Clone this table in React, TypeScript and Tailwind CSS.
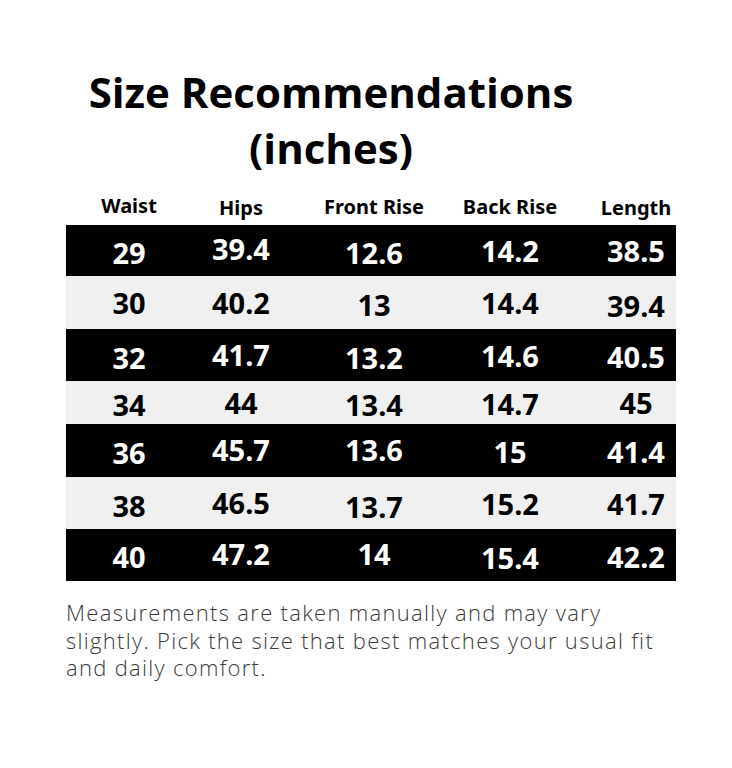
import React from 'react';

const headers: [string, number][] = [
  ['Waist', -2],
  ['Hips', 0],
  ['Front Rise', -1],
  ['Back Rise', -1],
  ['Length', 0],
];

// each cell: [value, vertical nudge in px] - the printed chart isn't perfectly aligned
const rows: { h: string; cells: [string, number][] }[] = [
  { h: 'h-[51px]', cells: [['29', 2], ['39.4', -2], ['12.6', 2], ['14.2', 0], ['38.5', 0]] },
  { h: 'h-[53px]', cells: [['30', 0], ['40.2', 0], ['13', 2], ['14.4', 0], ['39.4', 3]] },
  { h: 'h-[52px]', cells: [['32', 2], ['41.7', -1], ['13.2', 2], ['14.6', 0], ['40.5', 1]] },
  { h: 'h-[43px]', cells: [['34', 2], ['44', 0], ['13.4', 2], ['14.7', 1], ['45', 0]] },
  { h: 'h-[53px]', cells: [['36', 2], ['45.7', -1], ['13.6', -1], ['15', 1], ['41.4', 1]] },
  { h: 'h-[52px]', cells: [['38', 2], ['46.5', -1], ['13.7', 3], ['15.2', 0], ['41.7', 0]] },
  { h: 'h-[52px]', cells: [['40', 1], ['47.2', -2], ['14', -2], ['15.4', 2], ['42.2', 1]] },
];

const nudge: Record<number, string> = {
  [-2]: '-translate-y-[2px]',
  [-1]: '-translate-y-[1px]',
  0: '',
  1: 'translate-y-[1px]',
  2: 'translate-y-[2px]',
  3: 'translate-y-[3px]',
};

const cols = 'grid grid-cols-[126px_98px_168px_104px_114px] items-center';
const cell = ['text-center', 'text-center', 'text-center', 'text-center', 'text-center pl-[34px]'];

const App: React.FC = () => {
  return <div className="w-[732px] h-[768px] bg-white overflow-hidden">
      <h1 className="ml-[66px] pt-[64px] w-[530px] text-center text-[42px] leading-[56px] font-bold text-black font-['Open_Sans',sans-serif]">
        Size Recommendations
        <br />
        (inches)
      </h1>
      <div className="ml-[66px] mt-[14px] w-[610px] font-['Noto_Sans',sans-serif]">
        <div className={`${cols} h-[35px] text-[20px] font-bold text-black`}>
          {headers.map(([t, dy], i) => <div key={t} className={`${cell[i]} ${nudge[dy]}`}>{t}</div>)}
        </div>
        {rows.map((r, ri) => <div key={ri} className={`${cols} ${r.h} text-[29px] font-bold ${ri % 2 === 0 ? 'bg-black text-white' : 'bg-[#f0f0f0] text-black'}`}>
            {r.cells.map(([c, dy], i) => <div key={i} className={`${cell[i]} ${nudge[dy]} leading-none`}>{c}</div>)}
          </div>)}
      </div>
      <p className="ml-[66px] mt-[18px] w-[640px] text-[22px] leading-[27.5px] tracking-[1.3px] font-light text-[#3a3a3a] font-['Open_Sans',sans-serif]">
        Measurements are taken manually and may vary
        <br />
        slightly. Pick the size that best matches your usual fit
        <br />
        and daily comfort.
      </p>
    </div>;
};

export default App;
